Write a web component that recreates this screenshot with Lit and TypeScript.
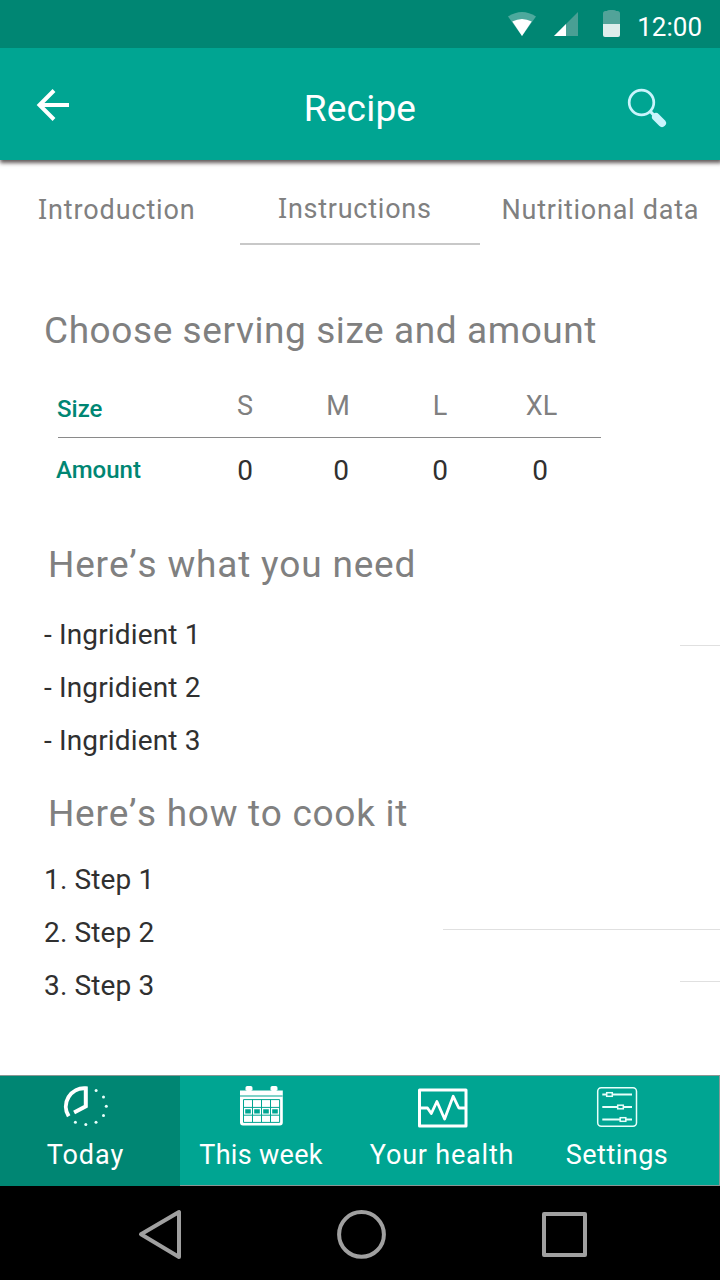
import { LitElement, html, svg, css } from "lit";
import { customElement } from "lit/decorators.js";

const navItems = [
  {
    label: "Today",
    key: "today",
    viewBox: "-1.5 0 60 50",
    icon: svg`<path d="M11.2 38.3A18.3 18.3 0 0 1 28.3 10.3V28.3L16.6 34.4" fill="none" stroke="#fff" stroke-width="4"/>
      <g fill="#e8fffb"><circle cx="38.6" cy="12.4" r="1.5"/><circle cx="46" cy="19.1" r="1.5"/><circle cx="48.8" cy="28.3" r="1.5"/><circle cx="46" cy="37.6" r="1.5"/><circle cx="38.5" cy="44.3" r="1.5"/><circle cx="28.3" cy="46.6" r="1.5"/><circle cx="17.9" cy="44.3" r="1.5"/></g>`,
  },
  {
    label: "This week",
    key: "week",
    viewBox: "1 0 60 50",
    icon: svg`<path fill="#fff" d="M10 12.5H52.8V44.5a3 3 0 0 1-3 3H13a3 3 0 0 1-3-3Z"/>
      <rect x="15.5" y="8" width="7" height="5" rx="1.8" fill="#fff"/><rect x="40.5" y="8" width="7" height="5" rx="1.8" fill="#fff"/>
      <rect x="10" y="17" width="42.8" height="2" fill="#80d2c9"/>
      <path d="M13.5 21.6H49.6V44.4H13.5ZM22.5 21.6V44.4M31.5 21.6V44.4M40.5 21.6V44.4M13.5 29.4H49.6M13.5 37.2H49.6" stroke="#00a592" stroke-width="1" fill="none"/>
      <path d="M15.2 31.2h5.6v4.3h-5.6zM24.2 31.2h5.6v4.3h-5.6zM33.2 31.2h5.6v4.3h-5.6zM42.2 31.2h5.6v4.3h-5.6z" fill="#00a592"/>`,
  },
  {
    label: "Your health",
    key: "health",
    viewBox: "0.5 0.5 60 50",
    icon: svg`<g fill="none" stroke="#fff" stroke-width="3" stroke-linejoin="round"><rect x="8" y="12.5" width="46.5" height="36"/>
      <path stroke-width="2.8" d="M8 30.5H16L19.8 36L25.4 24L33.1 41.5L41.7 18.8L47.3 30.5H54"/></g>`,
  },
  {
    label: "Settings",
    key: "settings",
    viewBox: "0 0 60 50",
    icon: svg`<g fill="none" stroke="#e8fffb" stroke-width="1.5"><rect x="10.7" y="9.7" width="38.8" height="38.6" rx="3.5"/>
      <path stroke-width="2" d="M15.3 16.5H19.5M25.5 16.5H45M15.3 29H30.5M36.5 29H45M15.3 41.5H33M39 41.5H45"/>
      <rect x="19.7" y="14.7" width="5.6" height="3.6"/><rect x="30.7" y="27.2" width="5.6" height="3.6"/><rect x="33.2" y="39.7" width="5.6" height="3.6"/></g>`,
  },
];

@customElement("app-root")
export class AppRoot extends LitElement {
  static styles = css`
    :host { display: flex; flex-direction: column; width: 720px; height: 1280px; overflow: hidden; background: #fff; font-family: Roboto, "Noto Sans", sans-serif; color: #808080; white-space: nowrap; }
    * { box-sizing: border-box; }
    h1, h2, ul, ol { margin: 0; padding: 0; font-weight: 400; list-style: none; }
    svg { display: block; flex: none; }
    .status { position: relative; z-index: 2; height: 48px; background: #008673; display: flex; align-items: flex-start; justify-content: flex-end; padding-right: 18px; color: #fff; font-size: 26px; line-height: 54px; }
    .status svg { margin-right: 11px; }
    .bar { height: 112px; background: #00a592; box-shadow: 1px 2px 4px 1px rgba(30, 20, 20, .7); display: grid; grid-template-columns: 240px 240px 240px; color: #fff; position: relative; z-index: 1; }
    .title { font-size: 37px; line-height: 121px; text-align: center; letter-spacing: .2px; }
    .tabs { height: 85px; display: grid; grid-template-columns: 240px 240px 240px; font-size: 27px; line-height: 40px; }
    .tab { padding: 30px 0 0 38px; letter-spacing: .87px; }
    .tab::first-letter { font-family: "Noto Sans", sans-serif; line-height: 1px; }
    .tab.active { padding-top: 29px; letter-spacing: .75px; border-bottom: 2px solid #c8c8c8; }
    .tab.last { padding-left: 21.5px; letter-spacing: .75px; }
    .tab.last::first-letter { font-family: Roboto, sans-serif; }
    .content { height: 830px; padding: 60px 0 0 44px; display: grid; grid-template-columns: minmax(0, 1fr) 277px; }
    .rules { display: flex; flex-direction: column; align-items: flex-end; }
    .rule { width: 40px; height: 1px; background: #e0e0e0; }
    .rule.first { margin-top: 340px; }
    .rule.wide { width: 277px; margin-top: 283px; }
    .rule.third { margin-top: 51px; }
    .heading { font-size: 37px; line-height: 51px; letter-spacing: .58px; }
    .sizes { width: 543px; margin: 26px 0 0 14px; }
    .row { display: grid; grid-template-columns: 137px 100px 92px 106px 94px; }
    .row.head { height: 56px; border-bottom: 1px solid #8a8a8a; }
    .label { color: #008673; font-size: 24px; font-weight: 500; line-height: 40px; margin-left: -1px; }
    .row.head .label { padding-top: 7px; }
    .size { font-size: 27px; line-height: 40px; text-align: center; padding-top: 4px; }
    .size:nth-child(3) { padding-right: 6px; }
    .size:nth-child(5) { padding-left: 3px; }
    .row.amounts { height: 65px; }
    .row.amounts .label { padding-top: 12px; margin-left: -2px; }
    .amount { font-size: 28px; line-height: 40px; color: #303030; text-align: center; padding-top: 13px; }
    .need { margin: 36px 0 0 4px; font-kerning: none; letter-spacing: .8px; }
    .list { color: #303030; font-size: 28px; line-height: 53px; letter-spacing: .15px; }
    .ingredients { margin-top: 18px; }
    .cook { margin: 21px 0 0 4px; font-kerning: none; letter-spacing: .7px; }
    .steps { margin-top: 14px; }
    .nav { height: 111px; background: #00a592; border: solid #8a9694; border-width: 1px 1px 1px 0; display: grid; grid-template-columns: 180px 162px 200px 150px; color: #fff; }
    .item { display: flex; flex-direction: column; align-items: center; font-size: 27px; line-height: 40px; padding-top: 2px; letter-spacing: .8px; }
    .item.today { background: #008673; padding-right: 9px; margin-bottom: -1px; letter-spacing: 1px; }
    .item.week { letter-spacing: .3px; }
    .item.settings { letter-spacing: .5px; }
    .item span { margin-top: 7px; }
    .system { height: 94px; background: #000; }
  `;

  render() {
    return html`
      <div class="status">
        <svg width="126" height="48" viewBox="500 0 126 48">
          <path d="M508 16.5Q522 7.5 536 16.5L522 36Z" fill="#4da99d"/><path d="M512.3 21.5Q522 16.5 531.7 21.5L522 36Z" fill="#fff"/>
          <path d="M578 12V36H554Z" fill="#4a9f94"/><path d="M566 24V36H554Z" fill="#fff"/>
          <path d="M603 24V13.5Q603 11 605.5 11H607Q607 10 610 10H613Q616 10 616 11H617.5Q620 11 620 13.5V24Z" fill="#52a399"/><path d="M603 24H620V35Q620 37 618 37H605Q603 37 603 35Z" fill="#deedeb"/>
        </svg>12:00
      </div>
      <header class="bar">
        <svg width="240" height="112" viewBox="0 48 240 112"><path d="M69 105H39.5M54 90.5L39.5 105L54 119.5" fill="none" stroke="#fff" stroke-width="4"/></svg>
        <h1 class="title">Recipe</h1>
        <svg width="240" height="112" viewBox="480 48 240 112"><g stroke="#c9f4fc" fill="none"><circle cx="641.5" cy="102.5" r="12.3" stroke-width="2.7"/><path d="M650 111L655 116.5" stroke-width="3.2"/><path d="M656 117L662 123" stroke-width="8" stroke-linecap="round"/></g></svg>
      </header>
      <nav class="tabs"><span class="tab">Introduction</span><span class="tab active">Instructions</span><span class="tab last">Nutritional data</span></nav>
      <main class="content">
        <div>
          <h2 class="heading">Choose serving size and amount</h2>
          <div class="sizes">
            <div class="row head"><span class="label">Size</span>${["S", "M", "L", "XL"].map((s) => html`<span class="size">${s}</span>`)}</div>
            <div class="row amounts"><span class="label">Amount</span>${[0, 0, 0, 0].map((n) => html`<span class="amount">${n}</span>`)}</div>
          </div>
          <h2 class="heading need">Here’s what you need</h2>
          <ul class="list ingredients">${[1, 2, 3].map((n) => html`<li>- Ingridient ${n}</li>`)}</ul>
          <h2 class="heading cook">Here’s how to cook it</h2>
          <ol class="list steps">${[1, 2, 3].map((n) => html`<li>${n}. Step ${n}</li>`)}</ol>
        </div>
        <div class="rules"><div class="rule first"></div><div class="rule wide"></div><div class="rule third"></div></div>
      </main>
      <nav class="nav">${navItems.map((item) => html`<div class="item ${item.key}"><svg width="60" height="50" viewBox=${item.viewBox}>${item.icon}</svg><span>${item.label}</span></div>`)}</nav>
      <div class="system"><svg width="720" height="94" viewBox="0 1186 720 94"><g fill="none" stroke="#a0a0a0" stroke-width="4" stroke-linejoin="round"><path d="M179 1212V1257L141 1234.3Z"/><circle cx="361.5" cy="1234.4" r="22.4"/><rect x="544" y="1214" width="41" height="41"/></g></svg></div>
    `;
  }
}
